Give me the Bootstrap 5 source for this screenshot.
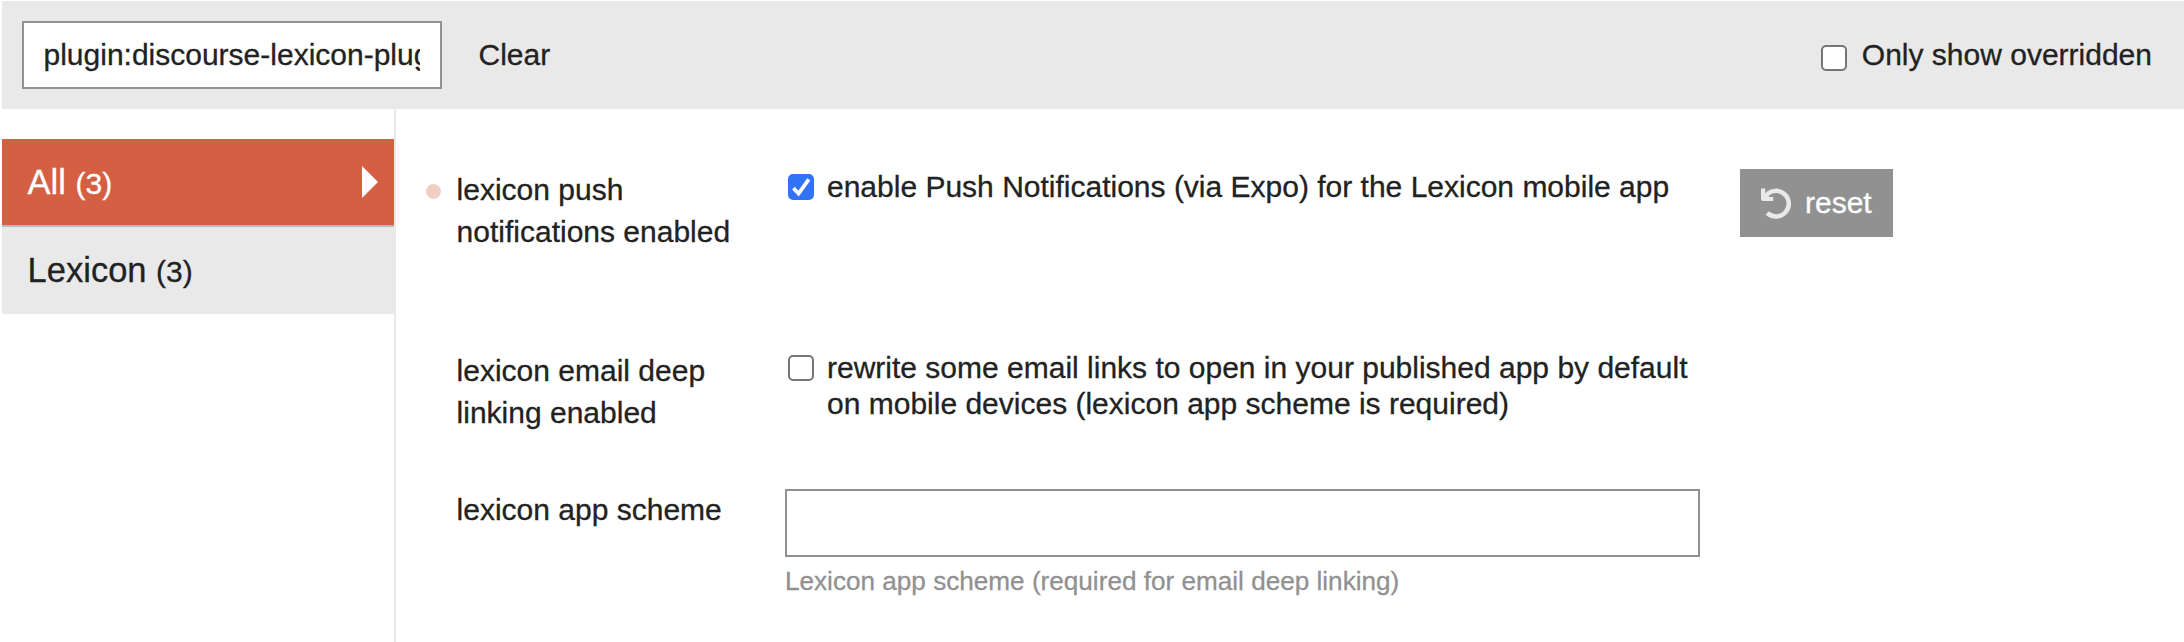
<!DOCTYPE html>
<html lang="en">
<head>
<meta charset="utf-8">
<title>Plugin settings</title>
<link href="https://cdn.jsdelivr.net/npm/bootstrap@5.3.0/dist/css/bootstrap.min.css" rel="stylesheet">
<style>
  body { font-family: "Liberation Sans", Arial, sans-serif; font-size: 30px; line-height: 42px; color: #222; background: #fff; overflow: hidden; -webkit-text-stroke: .3px; }
  .page { height: 642px; padding: 1px 0 0 2px; }
  .filter-bar { height: 108px; background: #e9e9e9; padding: 0 32px 0 20px; }
  .form-control, .form-control:focus { height: 68px; border: 2px solid #919191; border-radius: 0; padding: 0 20px; font-size: 30px; line-height: 36px; color: #222; background: #fff; box-shadow: none; }
  .filter-input, .filter-input:focus { width: 420px; padding-left: 19.5px; }
  .clear-btn { font-size: 30px; line-height: 36px; color: #222; border: 0; padding: 0; margin-left: 36.5px; }
  .form-check-input.setting-box { width: 26px; height: 26px; margin: 0; border: 2px solid #767676; border-radius: 5px; background-color: #fff; flex: none; }
  .form-check-input.setting-box:checked { background-color: #3273f6; border-color: #3273f6; background-size: 26px 26px; background-position: center; background-origin: border-box;
    background-image: url("data:image/svg+xml,%3Csvg xmlns='http://www.w3.org/2000/svg' viewBox='0 0 26 26'%3E%3Cpath d='M5.4 14.1l5.2 5.4L20.8 5.4' fill='none' stroke='%23fff' stroke-width='3.7'/%3E%3C/svg%3E"); }
  .form-check-input.only-box { margin-top: 5px; }
  .only-label { gap: 15px; }
  .side { width: 394px; border-right: 2px solid #e9e9e9; padding-top: 30px; }
  .side .nav-link { height: 87px; padding: 1px 16px 0 25.6px; font-size: 34.5px; color: #222; background: #e9e9e9; }
  .side .nav-link.active { height: 88px; color: #fff; background: #d55f42; border-bottom: 2px solid #bbb; }
  .side .nav-link svg { margin-bottom: 2px; }
  .side .num { font-size: 30px; }
  .settings { padding: 60px 0 0 30px; }
  .push-row { height: 181px; }
  .email-row { height: 139px; }
  .dot-col { width: 30px; padding-top: 15px; }
  .dot { width: 15px; height: 15px; background: #f1cec4; }
  .title-col { width: 329px; padding-left: .6px; }
  .value-col { width: 915px; }
  .check-row { gap: 13px; padding-left: 3px; line-height: 36px; }
  .check-row .setting-box { margin-top: 5px; }
  .desc { font-size: 26.14px; line-height: 36px; color: #919191; margin-top: 6px; }
  .reset-btn, .reset-btn:hover { width: 153px; height: 68px; margin-left: 40px; border: 0; border-radius: 0; background: #919191; color: #fff; font-size: 30px; line-height: 36px; padding: 0 0 0 20px; }
  .reset-btn svg { margin-right: 13px; }
</style>
</head>
<body>
<div class="page d-flex flex-column">
  <header class="filter-bar d-flex align-items-center">
    <input class="form-control filter-input" type="text" value="plugin:discourse-lexicon-plugin">
    <button class="btn clear-btn" type="button">Clear</button>
    <label class="only-label d-flex align-items-center ms-auto">
      <input class="form-check-input setting-box only-box" type="checkbox"><span>Only show overridden</span>
    </label>
  </header>
  <div class="d-flex flex-grow-1">
    <nav class="side nav flex-column flex-nowrap flex-shrink-0">
      <a class="nav-link active d-flex align-items-center justify-content-between" href="#"><span>All <span class="num">(3)</span></span>
        <svg width="16" height="32" viewBox="0 0 16 32"><path d="M0 0l16 16L0 32z" fill="#fff"/></svg></a>
      <a class="nav-link d-flex align-items-center" href="#"><span>Lexicon <span class="num">(3)</span></span></a>
    </nav>
    <main class="settings flex-grow-1">
      <div class="push-row d-flex align-items-start">
        <div class="dot-col"><div class="dot rounded-circle"></div></div>
        <div class="title-col">lexicon push<br>notifications enabled</div>
        <label class="value-col check-row d-flex"><input class="form-check-input setting-box" type="checkbox" checked><span>enable Push Notifications (via Expo) for the Lexicon mobile app</span></label>
        <button class="btn reset-btn d-flex align-items-center" type="button">
          <svg width="32" height="31" viewBox="0 0 32 31" fill="none" stroke="#e9e9e9"><path d="M7.2 25A12.8 12.8 0 1 0 5.2 8.8" stroke-width="4.5"/><path d="M3.1 .5V11H13.2" stroke-width="4.2" stroke-linejoin="round"/><path d="M3 10V7.5L6.5 5.5L10 10z" fill="#e9e9e9" stroke="none"/></svg>
          <span>reset</span></button>
      </div>
      <div class="email-row d-flex align-items-start">
        <div class="dot-col"></div>
        <div class="title-col">lexicon email deep<br>linking enabled</div>
        <label class="value-col check-row d-flex"><input class="form-check-input setting-box" type="checkbox"><span>rewrite some email links to open in your published app by default<br>on mobile devices (lexicon app scheme is required)</span></label>
      </div>
      <div class="d-flex align-items-start">
        <div class="dot-col"></div>
        <div class="title-col">lexicon app scheme</div>
        <div class="value-col"><input class="form-control" type="text"><div class="desc">Lexicon app scheme (required for email deep linking)</div></div>
      </div>
    </main>
  </div>
</div>
<script src="https://cdn.jsdelivr.net/npm/bootstrap@5.3.0/dist/js/bootstrap.bundle.min.js"></script>
</body>
</html>
